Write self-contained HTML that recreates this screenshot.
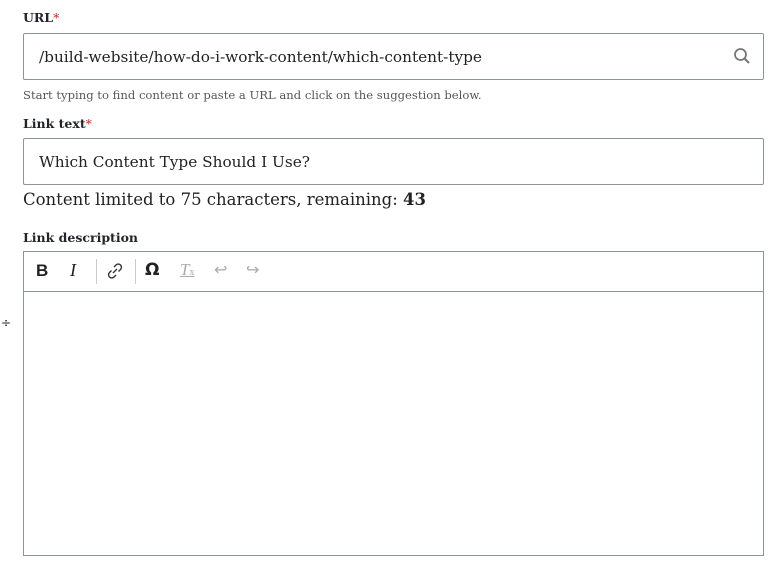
<!DOCTYPE html>
<html><head><style>
body{margin:0;width:768px;height:561px;background:#fff;font-family:"DejaVu Serif","Liberation Serif",serif;color:#222330;position:relative;overflow:hidden}
.abs{position:absolute}
.lbl{font-weight:bold;font-size:12.5px;color:#232429}
.req{color:#d72222;font-weight:normal}
.inp{left:23px;width:741px;border:1px solid #8e929c;border-radius:2px;box-sizing:border-box;font-size:15.3px;padding-left:15px;display:flex;align-items:center;color:#222}
</style></head><body>
<div class="abs lbl" style="left:23px;top:10px">URL<span class="req">*</span></div>
<div class="abs inp" style="top:33px;height:47px">/build-website/how-do-i-work-content/which-content-type</div>
<svg class="abs" style="left:733px;top:47px" width="18" height="18" viewBox="0 0 18 18"><circle cx="7.5" cy="7.5" r="5.5" fill="none" stroke="#777" stroke-width="1.8"/><path d="M11.5 11.5L16 16" stroke="#777" stroke-width="2"/></svg>
<div class="abs" style="left:23px;top:88px;font-size:11.6px;color:#55565b">Start typing to find content or paste a URL and click on the suggestion below.</div>
<div class="abs lbl" style="left:23px;top:116px">Link text<span class="req">*</span></div>
<div class="abs inp" style="top:138px;height:47px">Which Content Type Should I Use?</div>
<div class="abs" style="left:23px;top:190px;font-size:16.5px;color:#222">Content limited to 75 characters, remaining: <b>43</b></div>
<div class="abs lbl" style="left:23px;top:230px">Link description</div>
<div class="abs" style="left:23px;top:251px;width:741px;height:305px;border:1px solid #8e929c;box-sizing:border-box">
<div style="height:39px;border-bottom:1px solid #8e929c;position:relative">
<div class="abs" style="left:12px;top:9px;font:bold 17px 'Liberation Sans',sans-serif;color:#222">B</div>
<div class="abs" style="left:46px;top:8px;font:italic 18px 'Liberation Serif',serif;color:#222">I</div>
<div class="abs" style="left:72px;top:7px;width:1px;height:25px;background:#ccc"></div>
<svg class="abs" style="left:82px;top:10px" width="18" height="18" viewBox="0 0 18 18" fill="none" stroke="#333" stroke-width="1.4"><path d="M8 5l2-2a3 3 0 0 1 4.5 4.5l-2 2M10 13l-2 2a3 3 0 0 1-4.5-4.5l2-2M7 11l4-4"/></svg>
<div class="abs" style="left:111px;top:7px;width:1px;height:25px;background:#ccc"></div>
<div class="abs" style="left:121px;top:8px;font:17px 'DejaVu Sans',sans-serif;color:#222;font-weight:600">Ω</div>
<div class="abs" style="left:156px;top:8px;font:italic 17px 'Liberation Serif',serif;color:#aaa;text-decoration:underline">T<span style="font-size:10px;font-style:normal">x</span></div>
<div class="abs" style="left:190px;top:8px;font:16px 'DejaVu Sans',sans-serif;color:#aaa">↩</div>
<div class="abs" style="left:222px;top:8px;font:16px 'DejaVu Sans',sans-serif;color:#aaa">↪</div>
</div></div>
<div class="abs" style="left:1px;top:316px;font:12px 'DejaVu Sans',sans-serif;color:#222">÷</div>
</body></html>
